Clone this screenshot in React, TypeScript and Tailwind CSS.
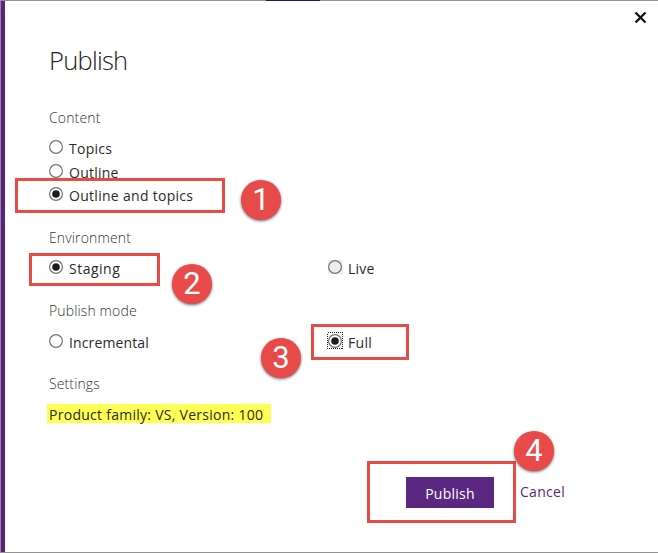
import type { ReactNode } from "react";

function Radio({ checked, hovered, focused }: { checked?: boolean; hovered?: boolean; focused?: boolean }) {
  return (
    <svg viewBox="0 0 16 17" className="-ml-px mt-px h-[17px] w-4 shrink-0" aria-hidden="true">
      {hovered && <rect x="1" y="2" width="15" height="14" fill="#efefef" />}
      {focused && (
        <rect x="0.5" y="0.5" width="15" height="16" fill="none" stroke="#222" strokeDasharray="1 1" shapeRendering="crispEdges" />
      )}
      <circle cx="8" cy="9" r="6.4" fill={hovered ? "#ededed" : "#fff"} stroke="#727272" strokeWidth="1.2" />
      {checked && <circle cx="8" cy="9" r="3.8" fill="#1d1d1d" />}
    </svg>
  );
}

interface OptionProps {
  label: string;
  track: string;
  checked?: boolean;
  hovered?: boolean;
  focused?: boolean;
}

function Option({ label, track, ...state }: OptionProps) {
  return (
    <label className="flex h-6 items-start">
      <Radio {...state} />
      <span className={"ml-[5px] whitespace-nowrap " + track}>{label}</span>
    </label>
  );
}

function Heading({ children, track }: { children: ReactNode; track: string }) {
  return <h2 className={"h-6 whitespace-nowrap font-light text-[#333] " + track}>{children}</h2>;
}

function Step({ n, place }: { n: number; place: string }) {
  return (
    <span
      className={
        "absolute flex size-10 items-center justify-center rounded-full bg-[#e84a4a] pb-px text-[31px] leading-none text-white shadow-[0_1px_3px_rgba(0,0,0,0.6)] font-['Roboto',sans-serif] " +
        place
      }
    >
      {n}
    </span>
  );
}

function Frame({ place }: { place: string }) {
  return <span className={"absolute border-3 border-[#e84a46] " + place} />;
}

export default function App() {
  return (
    <div className="relative flex h-[553px] w-[658px] flex-col overflow-hidden bg-white text-sm leading-6 text-[#2b2b2b] font-['Open_Sans',sans-serif]">
      <div className="flex h-px shrink-0 bg-[#929292]">
        <div className="ml-[266px] w-[54px] bg-[#32105a]" />
      </div>
      <div className="flex h-[551px] border-l border-[#8c8c8c]">
        <div className="w-1 shrink-0 bg-[#5a2382]" />
        <main className="flex grow flex-col pl-11">
          <div className="flex h-[105px] items-start justify-between">
            <h1 className="mt-[41px] text-[25.5px] font-light leading-9 tracking-[-0.75px] text-[#222]">Publish</h1>
            <button aria-label="Close" className="mr-[11px] mt-[9px]">
              <svg viewBox="0 0 14 14" className="size-[14px]">
                <path d="M2.5 2.5 12.5 12.5M12.5 2.5 2.5 12.5" stroke="#111" strokeWidth="2.3" />
              </svg>
            </button>
          </div>
          <section className="h-[120px]">
            <Heading track="tracking-[0.15px]">Content</Heading>
            <div className="mt-[7px]">
              <Option label="Topics" track="tracking-[0.25px]" />
              <Option label="Outline" track="tracking-[0.25px]" />
              <div className="-mt-px">
                <Option label="Outline and topics" track="tracking-[0.29px]" checked />
              </div>
            </div>
          </section>
          <section className="h-[73px]">
            <Heading track="tracking-[0.13px]">Environment</Heading>
            <div className="mt-[7px] grid grid-cols-[279px_1fr]">
              <Option label="Staging" track="tracking-[0.5px]" checked />
              <Option label="Live" track="tracking-[0.25px]" hovered />
            </div>
          </section>
          <section className="h-[73px]">
            <Heading track="tracking-[0.13px]">Publish mode</Heading>
            <div className="mt-2 grid grid-cols-[279px_1fr]">
              <Option label="Incremental" track="tracking-[0.13px]" />
              <Option label="Full" track="tracking-[0.3px]" checked focused />
            </div>
          </section>
          <section className="h-[105px]">
            <Heading track="tracking-[0.12px]">Settings</Heading>
            <p className="-ml-[2px] mt-2 h-[19px] w-[224px] whitespace-nowrap bg-[#ffff54] pl-[2px] leading-[22px] tracking-[0.27px]">
              Product family: VS, Version: 100
            </p>
          </section>
          <footer className="ml-[357px] flex items-start">
            <button className="flex h-[31px] w-[88px] items-center justify-center bg-[#5a2781] pt-[2px] tracking-[0.25px] text-white">
              Publish
            </button>
            <a className="ml-[26px] mt-[3px] tracking-[0.3px] text-[#5a2781]">Cancel</a>
          </footer>
        </main>
      </div>
      <div className="h-px shrink-0 bg-[#929292]" />

      <Frame place="left-[15px] top-[178px] h-[35px] w-[210px]" />
      <Frame place="left-[29px] top-[253px] h-[33px] w-[131px]" />
      <Frame place="left-[311px] top-[324px] h-[36px] w-[98px]" />
      <Frame place="left-[367px] top-[461px] h-[62px] w-[149px]" />
      <Step n={1} place="left-[241px] top-[180px]" />
      <Step n={2} place="left-[172px] top-[264px]" />
      <Step n={3} place="left-[261px] top-[338px]" />
      <Step n={4} place="left-[514px] top-[431px]" />
    </div>
  );
}
